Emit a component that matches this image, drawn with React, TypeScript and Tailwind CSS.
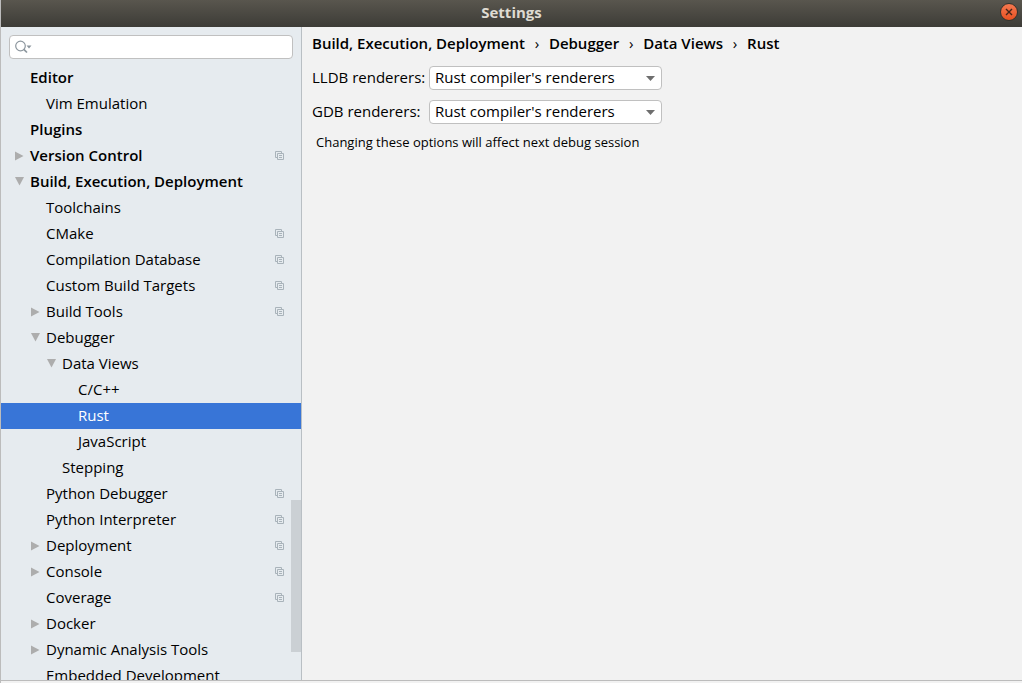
import { useState } from "react";
import clsx from "clsx";

type TreeItem = {
  label: string;
  level: 0 | 1 | 2 | 3;
  state?: "open" | "closed";
  perProject?: boolean;
};

const items: TreeItem[] = [
  { label: "Editor", level: 0 },
  { label: "Vim Emulation", level: 1 },
  { label: "Plugins", level: 0 },
  { label: "Version Control", level: 0, state: "closed", perProject: true },
  { label: "Build, Execution, Deployment", level: 0, state: "open" },
  { label: "Toolchains", level: 1 },
  { label: "CMake", level: 1, perProject: true },
  { label: "Compilation Database", level: 1, perProject: true },
  { label: "Custom Build Targets", level: 1, perProject: true },
  { label: "Build Tools", level: 1, state: "closed", perProject: true },
  { label: "Debugger", level: 1, state: "open" },
  { label: "Data Views", level: 2, state: "open" },
  { label: "C/C++", level: 3 },
  { label: "Rust", level: 3 },
  { label: "JavaScript", level: 3 },
  { label: "Stepping", level: 2 },
  { label: "Python Debugger", level: 1, perProject: true },
  { label: "Python Interpreter", level: 1, perProject: true },
  { label: "Deployment", level: 1, state: "closed", perProject: true },
  { label: "Console", level: 1, state: "closed", perProject: true },
  { label: "Coverage", level: 1, perProject: true },
  { label: "Docker", level: 1, state: "closed" },
  { label: "Dynamic Analysis Tools", level: 1, state: "closed" },
  { label: "Embedded Development", level: 1 },
];

const indent = ["pl-[13px]", "pl-[29px]", "pl-[45px]", "pl-[61px]"];

const crumbs = ["Build, Execution, Deployment", "Debugger", "Data Views", "Rust"];

function Arrow({ state }: { state?: "open" | "closed" }) {
  return (
    <span className="flex w-4 shrink-0 items-center pl-px">
      {state === "closed" && (
        <svg width="9" height="10" viewBox="0 0 9 10" fill="#adadad">
          <path d="M0 0.5L8.5 5L0 9.5z" />
        </svg>
      )}
      {state === "open" && (
        <svg width="9" height="10" viewBox="0 0 9 10" fill="#adadad">
          <path d="M0 0H9L4.5 8.5z" />
        </svg>
      )}
    </span>
  );
}

function ProjectIcon() {
  return (
    <svg
      className="shrink-0"
      width="9"
      height="10"
      viewBox="0 0 9 10"
      fill="none"
      stroke="#a9b3ba"
    >
      <path d="M2 6.5H0.5V0.5H6.5V2" />
      <path d="M2.5 2.5H8.5V8.5H2.5z" />
      <path d="M4 4.5H7M4 6.5H7" />
    </svg>
  );
}

function RendererSelect({ id, label }: { id: string; label: string }) {
  return (
    <div className="flex items-center">
      <label htmlFor={id} className="w-[117px] shrink-0 whitespace-nowrap pb-0.5">
        {label}
      </label>
      <div className="relative">
        <select
          id={id}
          className="block h-6 w-[233px] appearance-none rounded-sm border border-[#c0c0c0] bg-white pb-0.5 pl-[5px] pr-6 outline-none"
        >
          <option>Rust compiler's renderers</option>
          <option>None</option>
        </select>
        <svg
          className="pointer-events-none absolute right-[7px] top-[10px]"
          width="9"
          height="5"
          viewBox="0 0 9 5"
          fill="#6e6e6e"
        >
          <path d="M0 0H9L4.5 5z" />
        </svg>
      </div>
    </div>
  );
}

export default function App() {
  const [selected, setSelected] = useState("Rust");

  return (
    <div className="flex h-screen flex-col border-l border-[#bcbcbc] bg-[#f2f2f2] pb-0.5 font-['Open_Sans','Noto_Sans',sans-serif] text-[15px] leading-5 text-black">
      {/* title bar */}
      <header className="flex h-[27px] shrink-0 items-center bg-linear-to-b from-[#59564e] to-[#3d3c37] pl-[22px] pr-1">
        <h1 className="flex-1 pb-1 text-center font-bold text-[#dfdbd2]">
          Settings
        </h1>
        <button
          aria-label="Close"
          className="mb-[3px] grid h-[18px] w-[18px] place-items-center rounded-full border border-[#35332d] bg-linear-to-b from-[#f4784f] to-[#e9501f]"
        >
          <svg width="8" height="8" viewBox="0 0 8 8" stroke="#42251a" strokeWidth="1.4">
            <path d="M1 1L7 7M7 1L1 7" />
          </svg>
        </button>
      </header>

      <div className="flex min-h-0 flex-1 border-b border-[#bcbcbc]">
        {/* settings tree */}
        <aside className="relative flex w-[301px] shrink-0 flex-col border-r border-[#b9bfc4] bg-[#e6ebef]">
          <div className="px-2 pb-[6px] pt-2">
            <div className="flex h-6 items-center rounded-sm border border-[#c0c0c0] bg-white pl-[5px]">
              <svg
                className="shrink-0"
                width="17"
                height="14"
                viewBox="0 0 17 14"
                fill="none"
                stroke="#8c969e"
                strokeWidth="1.2"
              >
                <circle cx="5.5" cy="6" r="4.8" />
                <path d="M8.8 9.3L12 12.5" strokeWidth="1.7" />
                <path d="M11.5 5.5H16.5L14 8.5z" fill="#8c969e" stroke="none" />
              </svg>
              <input
                type="text"
                aria-label="Search settings"
                className="min-w-0 flex-1 bg-transparent px-1 outline-none"
              />
            </div>
          </div>

          <ul className="min-h-0 flex-1 overflow-hidden">
            {items.map((item) => (
              <li key={item.label}>
                <button
                  onClick={() => setSelected(item.label)}
                  className={clsx(
                    "flex h-[26px] w-full items-center pr-[17px] text-left",
                    indent[item.level],
                    item.level === 0 && "font-semibold",
                    item.label === selected && "bg-[#3875d7] text-white",
                  )}
                >
                  <Arrow state={item.state} />
                  <span className="flex-1 whitespace-nowrap pb-0.5">
                    {item.label}
                  </span>
                  {item.perProject && <ProjectIcon />}
                </button>
              </li>
            ))}
          </ul>

          {/* scrollbar thumb */}
          <div className="absolute bottom-7 right-0 h-[152px] w-[10px] bg-[#cbd0d4]" />
        </aside>

        {/* settings page */}
        <main className="min-w-0 flex-1 px-[10px] pt-[6px]">
          <nav aria-label="Breadcrumb">
            <ol className="flex font-semibold">
              {crumbs.map((c, i) => (
                <li key={c} className="flex whitespace-nowrap">
                  {i > 0 && <span className="w-6 text-center font-normal">›</span>}
                  {c}
                </li>
              ))}
            </ol>
          </nav>
          <form className="mt-[13px] flex flex-col gap-[10px]">
            <RendererSelect id="lldb" label="LLDB renderers:" />
            <RendererSelect id="gdb" label="GDB renderers:" />
          </form>
          <p className="mt-2 pl-1 text-[13px]">
            Changing these options will affect next debug session
          </p>
        </main>
      </div>
    </div>
  );
}
